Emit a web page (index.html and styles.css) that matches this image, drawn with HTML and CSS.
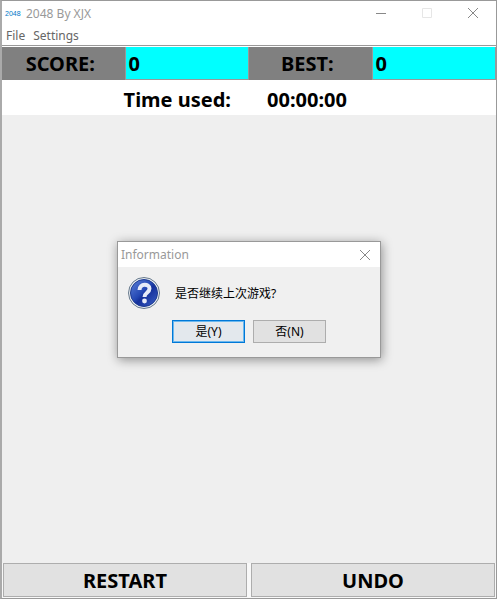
FILE: index.html
```html
<!DOCTYPE html>
<html lang="en">
<head>
  <meta charset="UTF-8">
  <meta name="viewport" content="width=device-width, initial-scale=1.0">
  <title>2048 By XJX</title>
  <link rel="stylesheet" href="styles.css">
</head>
<body>
  <div class="window">
    <header class="titlebar">
      <span class="app-icon">2048</span>
      <h1 class="title">2048 By XJX</h1>
      <div class="window-controls">
        <button class="control" aria-label="Minimize">
          <svg width="12" height="12" viewBox="0 0 12 12"><path d="M1 6.5h10" stroke="#888" fill="none"/></svg>
        </button>
        <button class="control" aria-label="Maximize" disabled>
          <svg width="12" height="12" viewBox="0 0 12 12"><path d="M1.5 1.5h9v9h-9z" stroke="#e6e6e6" fill="none"/></svg>
        </button>
        <button class="control" aria-label="Close">
          <svg width="12" height="12" viewBox="0 0 12 12"><path d="M1 1l10 10M11 1L1 11" stroke="#888" fill="none"/></svg>
        </button>
      </div>
    </header>

    <nav class="menubar">
      <button class="menu">File</button>
      <button class="menu">Settings</button>
    </nav>

    <div class="scores">
      <label class="score-label" for="score">SCORE:</label>
      <output class="score-value" id="score">0</output>
      <label class="score-label" for="best">BEST:</label>
      <output class="score-value" id="best">0</output>
    </div>

    <div class="timer">
      <span class="timer-label">Time used:</span>
      <span class="timer-value">00:00:00</span>
    </div>

    <main class="board"></main>

    <footer class="actions">
      <button class="action">RESTART</button>
      <button class="action">UNDO</button>
    </footer>

    <div class="dialog" role="dialog" aria-labelledby="dialogTitle">
      <div class="dialog-titlebar">
        <h2 class="title" id="dialogTitle">Information</h2>
        <button class="dialog-close" aria-label="Close">
          <svg width="12" height="12" viewBox="0 0 12 12"><path d="M1 1l10 10M11 1L1 11" stroke="#888" fill="none"/></svg>
        </button>
      </div>
      <div class="dialog-message">
        <svg class="question" width="32" height="32" viewBox="0 0 32 32">
          <defs>
            <linearGradient id="ball" x1="0" y1="0" x2="1" y2="1">
              <stop offset="0" stop-color="#5f83d8"/>
              <stop offset="0.45" stop-color="#2448b4"/>
              <stop offset="0.55" stop-color="#14309a"/>
              <stop offset="1" stop-color="#3c62c8"/>
            </linearGradient>
          </defs>
          <circle cx="16" cy="16" r="15.5" fill="#e8edf2" stroke="#67798c"/>
          <circle cx="16" cy="16" r="13.5" fill="url(#ball)" stroke="#1c3a91"/>
          <path d="M11.5 13c0-7 10-6.500 10-1.500 0 4.500-5 4-5 8.500" fill="none" stroke="#e6ebf8" stroke-width="4"/>
          <circle cx="16.500" cy="24" r="2.400" fill="#e6ebf8"/>
        </svg>
        <p lang="zh">是否继续上次游戏?</p>
      </div>
      <div class="dialog-buttons" lang="zh">
        <button class="choice choice-default">是(Y)</button>
        <button class="choice">否(N)</button>
      </div>
    </div>
  </div>
</body>
</html>
```
FILE: styles.css
```css
* {
  box-sizing: border-box;
}

body {
  margin: 0;
  font-family: "Noto Sans", "Noto Sans CJK SC", sans-serif;
  font-size: 12px;
  color: #000;
  background: #fff;
}

button {
  padding: 0;
  font: inherit;
  color: inherit;
  border: none;
  background: none;
}

h1,
h2,
p {
  margin: 0;
}

.window {
  position: relative;
  display: flex;
  flex-direction: column;
  height: 100vh;
  border: 1px solid #999;
  border-left: 2px solid #aaa;
  background: #fff;
}

.titlebar {
  display: flex;
  align-items: center;
  height: 24px;
  padding-left: 3px;
}

.app-icon {
  width: 21px;
  font-family: "Liberation Sans", sans-serif;
  font-size: 7px;
  color: #0078c8;
}

.title {
  font-size: 12px;
  font-weight: normal;
  color: #999;
}

.window-controls {
  display: flex;
  margin-left: auto;
}

.control {
  display: grid;
  place-items: center;
  width: 46px;
  height: 24px;
}

.menubar {
  display: flex;
  gap: 8px;
  height: 21px;
  padding: 0 4px;
  color: #666;
  border-bottom: 1px solid #999;
}

.scores {
  display: grid;
  grid-template-columns: repeat(4, 1fr);
  height: 34px;
  padding-top: 1px;
  font-size: 20px;
  font-weight: bold;
  line-height: 32px;
}

.score-label {
  padding: 1px 6px 0 0;
  line-height: 32px;
  text-align: center;
  background: #808080;
  border-right: 1px solid #999;
}

.score-value {
  padding: 1px 0 0 3px;
  line-height: 31px;
  background: #0ff;
  border-right: 1px solid #999;
  border-bottom: 1px solid #999;
}

.timer {
  display: grid;
  grid-template-columns: 1fr 1fr;
  gap: 36px;
  height: 35px;
  font-size: 20px;
  font-weight: bold;
  line-height: 40px;
}

.timer-label {
  text-align: right;
}

.board {
  flex: 1;
  background: #efefef;
}

.actions {
  display: grid;
  grid-template-columns: 1fr 1fr;
  gap: 4px;
  padding: 0 1px 1px;
  background: #f8f8f8;
}

.action {
  height: 34px;
  font-size: 20px;
  font-weight: bold;
  line-height: 34px;
  background: #e1e1e1;
  border: 1px solid #adadad;
}

.dialog {
  position: absolute;
  inset: 0;
  width: 264px;
  height: fit-content;
  margin: auto;
  background: #f0f0f0;
  border: 1px solid #999;
  box-shadow: 1px 2px 10px rgba(0, 0, 0, 0.4);
}

.dialog-titlebar {
  display: flex;
  align-items: center;
  justify-content: space-between;
  height: 25px;
  padding: 0 9px 0 3px;
  background: #fff;
}

.dialog-close {
  display: flex;
}

.dialog-message {
  display: flex;
  align-items: center;
  gap: 15px;
  padding: 10px 10px 0;
}

.dialog-buttons {
  display: flex;
  justify-content: center;
  gap: 8px;
  padding: 11px 0 14px;
}

.choice {
  width: 73px;
  height: 23px;
  line-height: 20px;
  background: #e1e1e1;
  border: 1px solid #adadad;
}

.choice-default {
  background: #e3e8ed;
  border-color: #0078d7;
  box-shadow: inset 0 0 0 1px #6cb8ee;
}
```
